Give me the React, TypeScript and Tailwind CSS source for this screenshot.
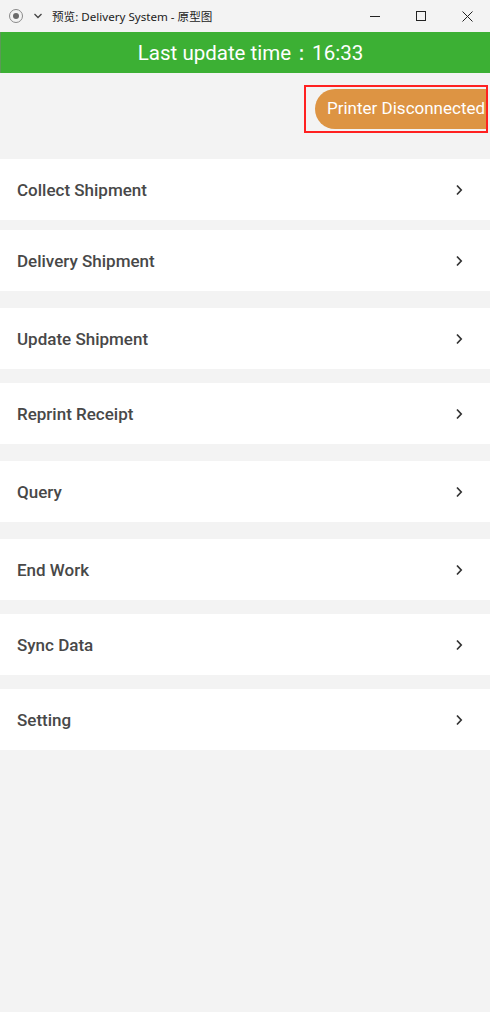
import React from "react";

const items = [
  { label: "Collect Shipment", mt: "mt-px" },
  { label: "Delivery Shipment", mt: "mt-[10px]" },
  { label: "Update Shipment", mt: "mt-[17px]" },
  { label: "Reprint Receipt", mt: "mt-[14px]" },
  { label: "Query", mt: "mt-[17px]" },
  { label: "End Work", mt: "mt-[17px]" },
  { label: "Sync Data", mt: "mt-[14px]" },
  { label: "Setting", mt: "mt-[14px]" },
];

function Chevron() {
  return (
    <svg width="8" height="12" viewBox="0 0 8 12" className="shrink-0">
      <path d="M2 1.5 L6.2 6 L2 10.5" fill="none" stroke="#333" strokeWidth="1.7" />
    </svg>
  );
}

export default function App() {
  return (
    <div
      className="w-[490px] h-[1012px] bg-[#f3f3f3] overflow-hidden flex flex-col"
      style={{ fontFamily: "Roboto, 'Noto Sans', sans-serif" }}
    >
      {/* Title bar */}
      <div className="h-8 bg-[#f3f3f3] flex items-center shrink-0">
        <div className="ml-[9px] w-[14px] h-[14px] rounded-full border border-[#8a8a8a] flex items-center justify-center">
          <div className="w-[6px] h-[6px] rounded-full bg-[#6a6a6a]" />
        </div>
        <svg width="10" height="8" viewBox="0 0 10 8" className="ml-[10px]">
          <path d="M1.5 2 L5 5.5 L8.5 2" fill="none" stroke="#444" strokeWidth="1.3" />
        </svg>
        <span
          className="ml-[9px] text-[11.6px] text-[#222] mt-px"
          style={{ fontFamily: "'Segoe UI', 'Noto Sans', 'Noto Sans CJK SC', sans-serif" }}
        >
          预览: Delivery System - 原型图
        </span>
        <div className="ml-auto flex items-center h-full">
          <div className="w-[46px] h-full flex items-center justify-center">
            <div className="w-[10px] h-px bg-[#222]" />
          </div>
          <div className="w-[46px] h-full flex items-center justify-center">
            <div className="w-[10px] h-[10px] border border-[#222]" />
          </div>
          <div className="w-[46px] h-full flex items-center justify-center">
            <svg width="11" height="11" viewBox="0 0 11 11">
              <path d="M0.5 0.5 L10.5 10.5 M10.5 0.5 L0.5 10.5" stroke="#222" strokeWidth="1" />
            </svg>
          </div>
        </div>
      </div>

      {/* Green header */}
      <div className="h-[41px] bg-[#3cb034] border-l border-[#5a9a55] flex items-center justify-center shrink-0">
        <span className="text-white text-[20.5px] ml-[10px] mt-[2px]">Last update time：16:33</span>
      </div>

      {/* Printer status area */}
      <div className="h-[85px] flex items-start justify-end shrink-0 pt-[12px] pr-[2px]">
        <div className="w-[184px] h-[48px] border-2 border-[#ff2020] overflow-hidden flex items-center">
          <div className="ml-[9px] h-[40px] pl-[12px] pr-[30px] rounded-full bg-[#dd9443] flex items-center whitespace-nowrap shrink-0">
            <span className="text-white text-[17px]">Printer Disconnected</span>
          </div>
        </div>
      </div>

      {/* Menu */}
      <div className="flex flex-col">
        {items.map((it) => (
          <div
            key={it.label}
            className={`${it.mt} h-[61px] bg-white flex items-center justify-between pl-[17px] pr-[27px]`}
          >
            <span className="text-[17px] text-[#484848] font-medium mt-[2px]">{it.label}</span>
            <Chevron />
          </div>
        ))}
      </div>
    </div>
  );
}
